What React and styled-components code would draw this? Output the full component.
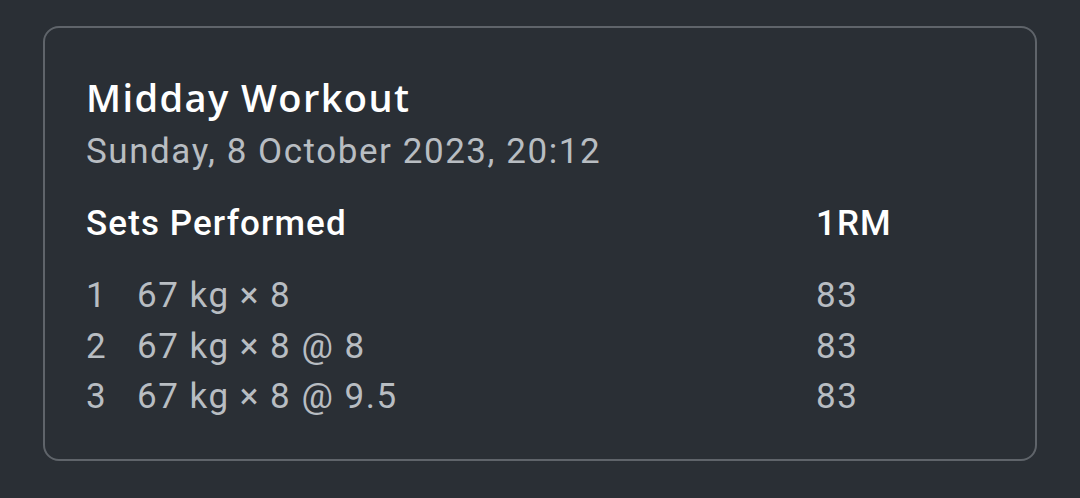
import React from 'react';
import styled, { createGlobalStyle } from 'styled-components';

const GlobalStyle = createGlobalStyle`
  html, body {
    margin: 0;
    padding: 0;
    background: #2a2f35;
  }
  body {
    font-family: Roboto, "Noto Sans", sans-serif;
  }
`;

const Page = styled.div`
  width: 1080px;
  height: 498px;
  box-sizing: border-box;
  padding: 26px 43px 37px 43px;
  background: #2a2f35;
`;

const Card = styled.div`
  height: 100%;
  box-sizing: border-box;
  border: 2px solid #5f646a;
  border-radius: 16px;
  padding: 47px 41px 0 41px;
  color: #ffffff;
`;

const Title = styled.h1`
  margin: 0;
  font-family: "Open Sans", "Noto Sans", sans-serif;
  font-weight: 600;
  font-size: 38px;
  line-height: 44px;
  letter-spacing: 1.4px;
  color: #ffffff;
`;

const Subtitle = styled.div`
  margin-top: 8px;
  font-size: 35px;
  line-height: 50px;
  letter-spacing: 1.55px;
  color: #b8bdc2;
`;

const Table = styled.div`
  margin-top: 22px;
  display: grid;
  grid-template-columns: 730px 1fr;
`;

const HeadCell = styled.div`
  font-size: 35px;
  font-weight: 500;
  line-height: 50px;
  letter-spacing: 1.1px;
  color: #ffffff;
  margin-bottom: 22px;
`;

const Cell = styled.div`
  display: flex;
  font-size: 35px;
  line-height: 50.5px;
  letter-spacing: 1.5px;
  color: #b8bdc2;
`;

const Index = styled.span`
  width: 51px;
`;

const sets = [
  { n: 1, text: '67 kg × 8', rm: 83 },
  { n: 2, text: '67 kg × 8 @ 8', rm: 83 },
  { n: 3, text: '67 kg × 8 @ 9.5', rm: 83 },
];

export default function App() {
  return (
    <>
      <GlobalStyle />
      <Page>
        <Card>
          <Title>Midday Workout</Title>
          <Subtitle>Sunday, 8 October 2023, 20:12</Subtitle>
          <Table>
            <HeadCell>Sets Performed</HeadCell>
            <HeadCell>1RM</HeadCell>
            {sets.map((s) => (
              <React.Fragment key={s.n}>
                <Cell>
                  <Index>{s.n}</Index>
                  <span>{s.text}</span>
                </Cell>
                <Cell>{s.rm}</Cell>
              </React.Fragment>
            ))}
          </Table>
        </Card>
      </Page>
    </>
  );
}
